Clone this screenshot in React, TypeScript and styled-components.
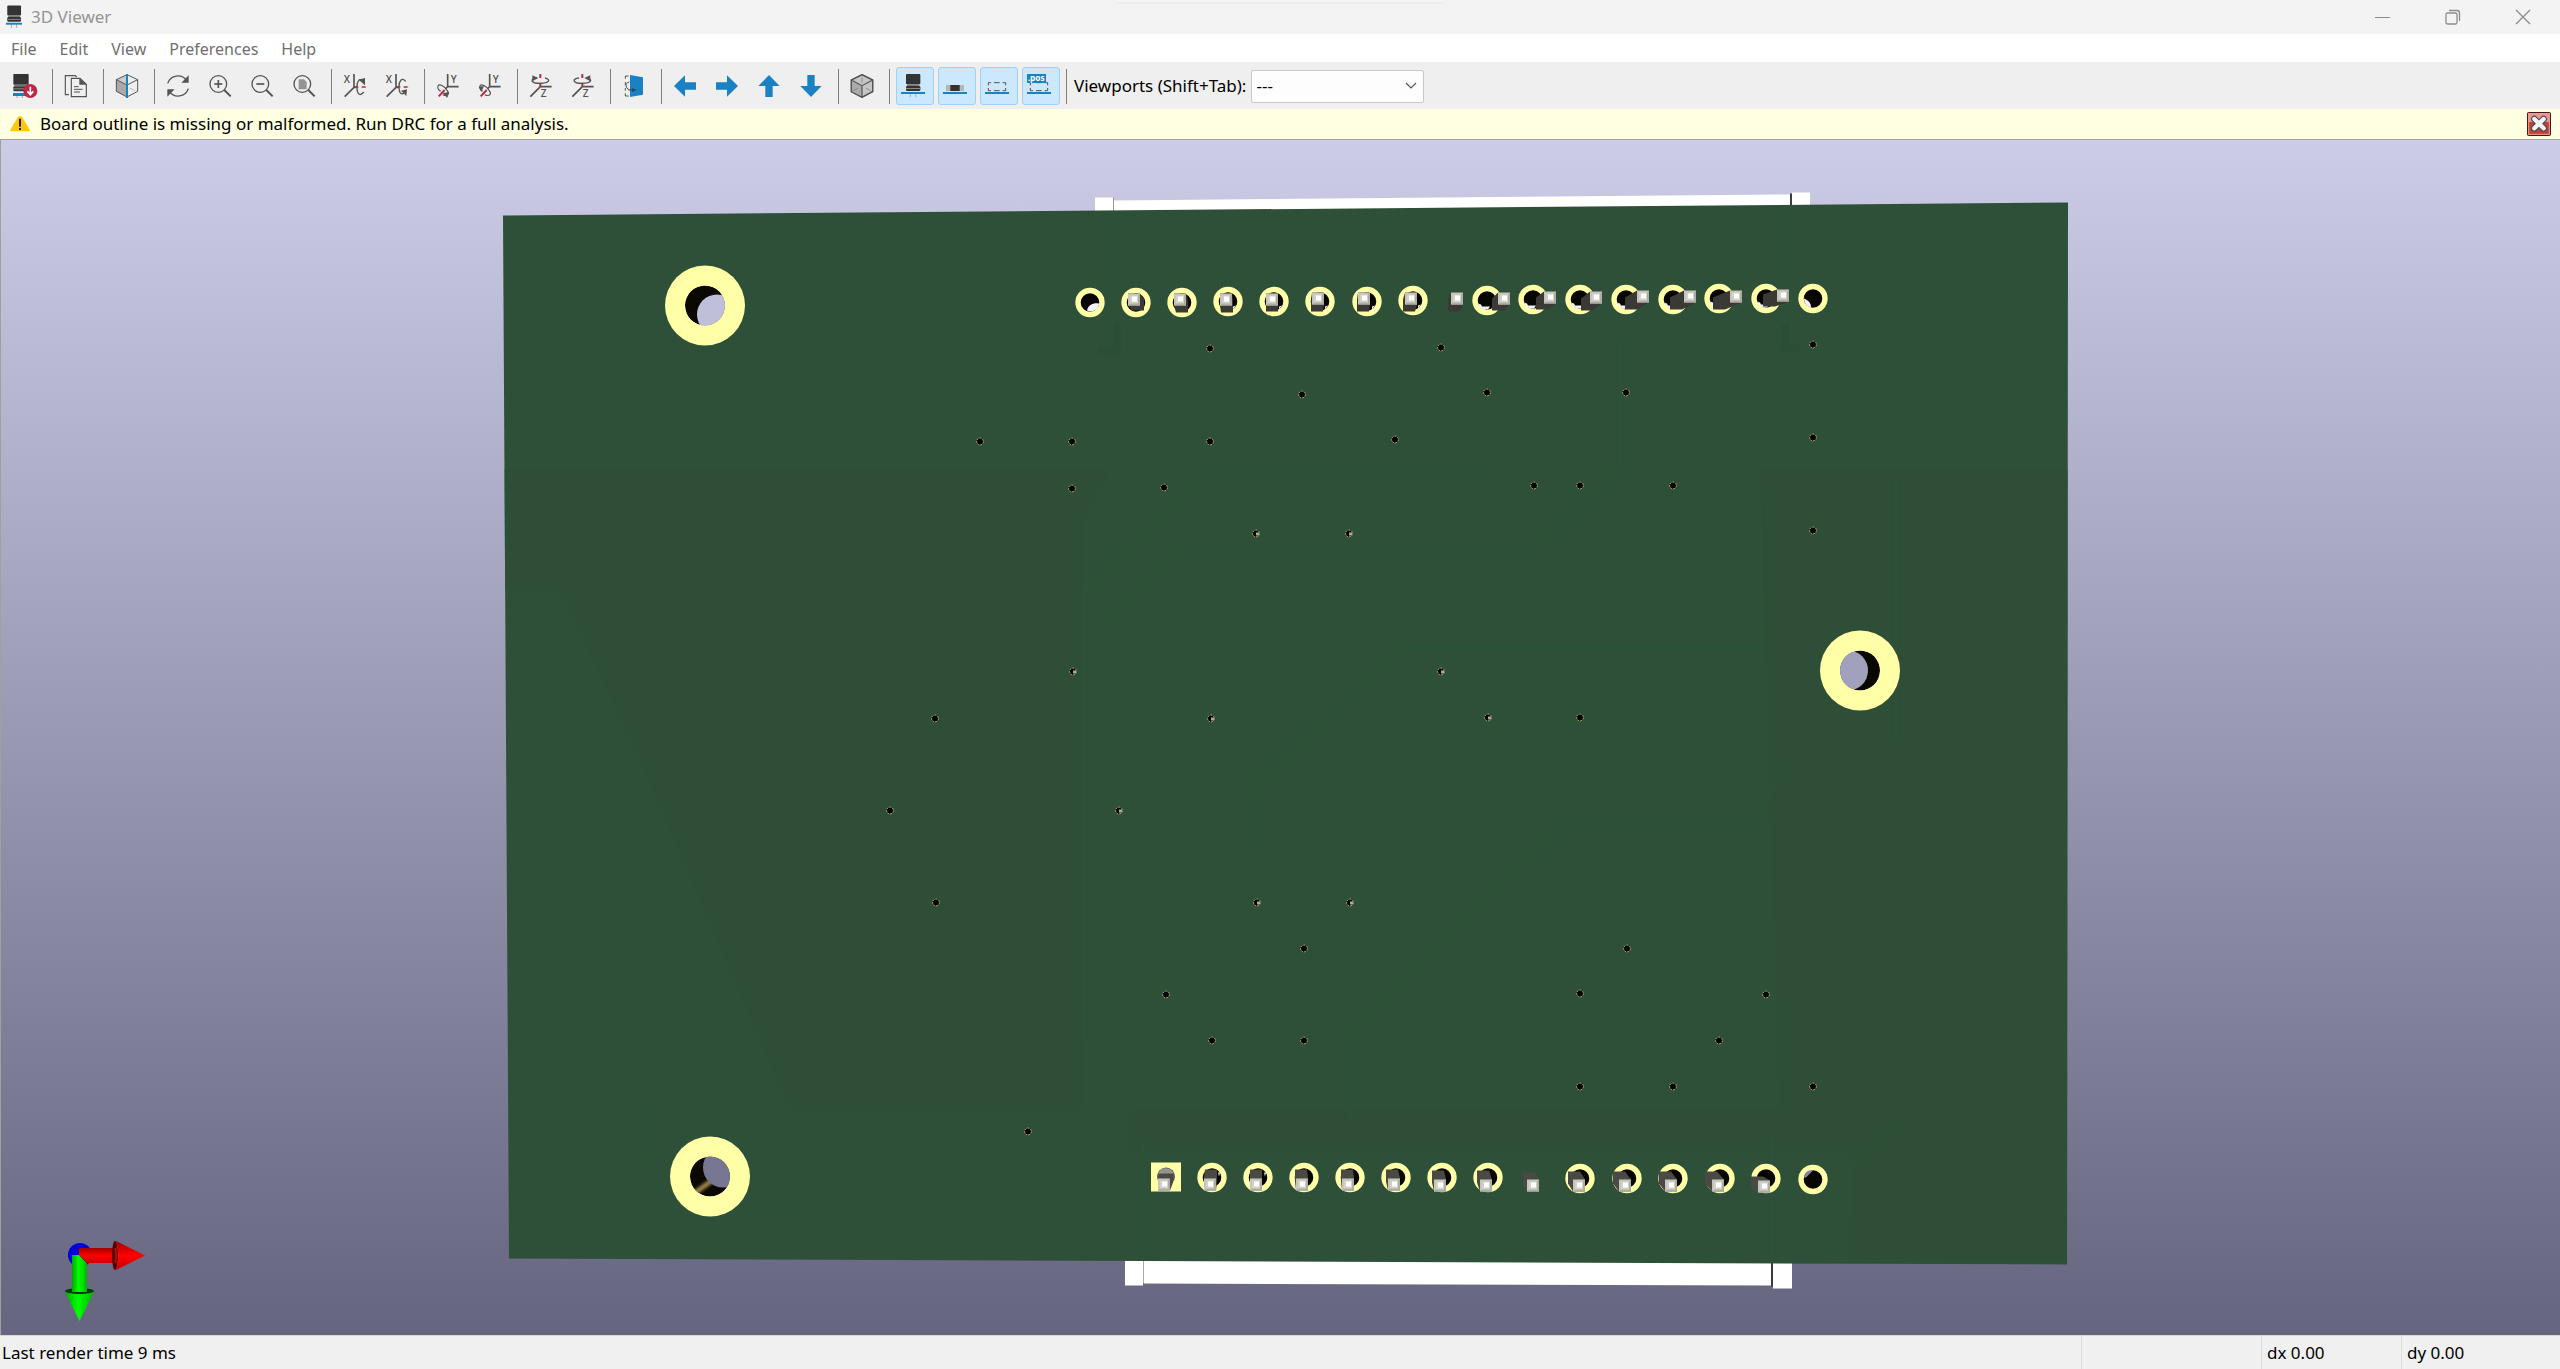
import React from "react";
import styled, { createGlobalStyle } from "styled-components";

const GlobalStyle = createGlobalStyle`
  *, *::before, *::after { box-sizing: border-box; }
  body { margin: 0; background: #efefef; }
  body, button, select {
    font-family: "Segoe UI", "Noto Sans", "Open Sans", sans-serif;
    font-size: 17px;
    line-height: 24px;
    color: #000;
  }
`;

const Window = styled.div`
  min-height: 100vh;
  display: flex;
  flex-direction: column;
`;

const TitleBar = styled.header`
  position: relative;
  height: 34px;
  flex: none;
  display: flex;
  align-items: center;
  justify-content: space-between;
  padding: 0 2px 0 6px;
  background: #f3f3f3;
`;

const SnapHandle = styled.div`
  position: absolute;
  top: 0;
  left: 50%;
  width: 328px;
  height: 2px;
  transform: translateX(-50%);
  border-radius: 0 0 8px 8px;
  background: #f6f6f6;
  box-shadow: 0 0 3px #dadada;
`;

const TitleText = styled.h1`
  display: flex;
  align-items: center;
  gap: 9px;
  margin: 0;
  font-size: 17px;
  font-weight: 400;
  color: #959595;
`;

const WindowControls = styled.div`
  display: flex;
`;

const WindowButton = styled.button`
  width: 70px;
  height: 34px;
  display: grid;
  place-items: center;
  padding: 0;
  border: 0;
  background: transparent;
  color: #8c8c8c;
`;

const MenuBar = styled.nav`
  height: 28px;
  flex: none;
  display: flex;
  align-items: center;
  gap: 23px;
  padding: 2px 0 0 11px;
  background: #fff;
`;

const MenuItem = styled.button`
  padding: 0;
  border: 0;
  background: transparent;
  font-size: 16px;
  color: #6f6f6f;
`;

const ToolBar = styled.div`
  height: 47px;
  flex: none;
  display: flex;
  align-items: center;
  padding: 1px 0 0 6px;
  background: #efefef;
`;

const ToolButton = styled.button<{ $active?: boolean }>`
  width: 38px;
  height: 38px;
  flex: none;
  display: grid;
  place-items: center;
  margin: 0 2px;
  padding: 0 4px 0 0;
  border: 1px solid ${(p) => (p.$active ? "#99d1ff" : "transparent")};
  border-radius: 3px;
  background: ${(p) => (p.$active ? "#cce8ff" : "transparent")};
`;

const GlyphSvg = styled.svg`
  display: block;
  width: 24px;
  height: 24px;
  overflow: visible;
`;

const Separator = styled.span`
  width: 1px;
  height: 35px;
  flex: none;
  margin: 0 4px;
  background: #7f7f7f;
`;

const ViewportLabel = styled.label`
  margin: 0 5px 0 3px;
  white-space: nowrap;
`;

const SelectWrap = styled.div`
  display: grid;
  align-items: center;
  width: 173px;

  & > * { grid-area: 1 / 1; }
  & > svg { justify-self: end; margin-right: 7px; pointer-events: none; }
`;

const ViewportSelect = styled.select`
  appearance: none;
  width: 100%;
  height: 33px;
  padding: 0 28px 0 4px;
  border: 1px solid #c8c8c8;
  border-radius: 2px;
  background: #fdfdfd;
`;

const InfoBar = styled.div`
  height: 30px;
  flex: none;
  display: flex;
  align-items: center;
  gap: 10px;
  padding: 0 9px 0 10px;
  background: #ffffe1;
`;

const InfoText = styled.p`
  flex: 1;
  margin: 0;
`;

const DismissButton = styled.button`
  width: 24px;
  height: 24px;
  display: grid;
  place-items: center;
  padding: 0;
  border: 0;
  background: transparent;
`;

const Viewport = styled.main`
  position: relative;
  flex: 1;
  min-height: 0;
  display: flex;
  border-top: 1px solid #a0a0a0;
  border-left: 1px solid #a0a0a0;
  background: linear-gradient(#cccce6, #65657f);
`;

const BoardDrawing = styled.svg`
  display: block;
  width: 100%;
  height: auto;
`;

const AxesGizmo = styled.svg`
  position: absolute;
  left: 59px;
  bottom: 9px;
`;

const StatusBar = styled.footer`
  height: 34px;
  flex: none;
  display: grid;
  grid-template-columns: 1fr 180px 140px 159px;
  align-items: stretch;
  border-top: 1px solid #d7d7d7;
  background: #f0f0f0;
`;

const StatusField = styled.span<{ $divided?: boolean }>`
  display: flex;
  align-items: center;
  padding-left: ${(p) => (p.$divided ? 5 : 2)}px;
  border-left: ${(p) => (p.$divided ? "1px solid #dcdcdc" : "0")};
`;

/* ---------- toolbar icons, drawn on a 72 unit grid ---------- */

const INK = "#545454";
const BLUE = "#1a81c4";
const RED = "#bf2641";

function Glyph({ children }: { children: React.ReactNode }) {
  return (
    <GlyphSvg viewBox="0 0 72 72" fill="none" stroke={INK} strokeWidth="4" aria-hidden="true">
      {children}
    </GlyphSvg>
  );
}

const Capacitor = () => (
  <g stroke="none">
    <path d="M28 58V70M44 58V70" stroke="#b9b9b9" strokeWidth="4" />
    <rect x="15" y="0" width="43" height="31" rx="3" fill="#333" />
    <rect x="18" y="31" width="37" height="5" fill="#777" />
    <rect x="15" y="36" width="43" height="15" rx="4" fill="#333" />
    <rect x="15" y="42" width="43" height="3" fill="#888" />
    <rect x="0" y="54" width="72" height="6" fill={BLUE} />
  </g>
);

const ReloadIcon = () => (
  <Glyph>
    <g stroke="none">
      <path d="M12 66V72M28 66V72" stroke="#b9b9b9" strokeWidth="4" />
      <rect x="1" y="0" width="46" height="32" rx="2" fill="#333" />
      <rect x="4" y="32" width="40" height="5" fill="#777" />
      <rect x="1" y="37" width="46" height="15" rx="3" fill="#3a3a3a" />
      <rect x="1" y="43" width="40" height="3" fill="#888" />
      <rect x="0" y="57" width="44" height="9" fill={BLUE} />
      <circle cx="52" cy="51" r="21" fill={RED} />
    </g>
    <path d="M52 38V61M43 52L52 62L61 52" stroke="#fff" strokeWidth="5" />
  </Glyph>
);

const CopyIcon = () => (
  <Glyph>
    <path d="M15 62H4V5H34L38 9" strokeWidth="3.5" />
    <path d="M22 13H48L67 31V68H22Z" strokeWidth="3.5" />
    <path d="M46 12V32H67Z" fill={INK} stroke="none" />
    <path d="M30 38H44M30 46H56M30 54H48" strokeWidth="3" />
  </Glyph>
);

const RaytraceIcon = () => (
  <Glyph>
    <path d="M4 17L36 33V69L4 52Z" fill="#a9a9a9" stroke="none" />
    <path d="M4 17L36 2L36 33Z" fill="#ccc" stroke="none" />
    <path d="M36 2L68 17V52L36 69L4 52V17ZM4 17L36 33L68 17" strokeWidth="3" />
    <path d="M44 42L60 50" strokeWidth="2" stroke="#999" />
    <path d="M36 0V72" stroke={BLUE} strokeWidth="6" />
  </Glyph>
);

const RefreshIcon = () => (
  <Glyph>
    <path d="M5 28A32 32 0 0 1 62 20M67 44A32 32 0 0 1 10 52" />
    <path d="M68 4V26H46ZM4 68V46H26Z" fill={INK} stroke="none" />
  </Glyph>
);

const ZoomIcon = ({ kind }: { kind: "in" | "out" | "fit" }) => (
  <Glyph>
    {kind === "fit" && <path d="M20 16H36L44 24V46H20Z" fill="#949494" stroke="none" />}
    <circle cx="31" cy="30" r="25" />
    <path d="M49 48L68 67" strokeWidth="6" />
    {kind !== "fit" && <path d="M19 30H43" strokeWidth="5" />}
    {kind === "in" && <path d="M31 18V42" strokeWidth="5" />}
  </Glyph>
);

const AxisText = ({ x, y, children }: { x: number; y: number; children: string }) => (
  <text x={x} y={y} fill={INK} stroke="none" fontSize="30" fontWeight="600" fontFamily="Open Sans, sans-serif">
    {children}
  </text>
);

const RotateXIcon = ({ back }: { back?: boolean }) => (
  <Glyph>
    <AxisText x={2} y={26}>X</AxisText>
    <path d="M33 0V40L5 68M33 40H40" strokeWidth="5" />
    <path d="M33 39H46M56 39H68" stroke={RED} strokeWidth="5" />
    {back ? (
      <g>
        <path d="M62 22C50 8 42 22 42 38C42 60 52 66 60 52" />
        <path d="M48 50L66 46L64 66Z" fill={INK} stroke="none" />
      </g>
    ) : (
      <g>
        <path d="M60 24C50 8 42 22 42 38C42 62 52 68 62 54" />
        <path d="M47 17L66 12L66 34Z" fill={INK} stroke="none" />
      </g>
    )}
  </Glyph>
);

const RotateYIcon = ({ back }: { back?: boolean }) => (
  <Glyph>
    <AxisText x={44} y={27}>Y</AxisText>
    <path d="M35 0V38H68M35 38L28 45" strokeWidth="5" />
    <path d="M26 48L8 67" stroke={RED} strokeWidth="6" />
    <path d="M20 62C34 68 42 62 34 50C26 36 8 28 6 36C4 42 8 48 14 52" strokeWidth="3.5" />
    {back ? (
      <path d="M2 38L18 36L10 54Z" fill={INK} stroke="none" />
    ) : (
      <path d="M20 58L38 54L34 72Z" fill={INK} stroke="none" />
    )}
  </Glyph>
);

const RotateZIcon = ({ back }: { back?: boolean }) => (
  <Glyph>
    <AxisText x={35} y={69}>Z</AxisText>
    <path d="M34 38L4 68M34 38H68" strokeWidth="5" />
    <path d="M34 0V12M34 26V38" stroke={RED} strokeWidth="6" />
    <path d="M24 12C2 14 4 28 34 28C62 28 66 16 48 12" />
    {back ? (
      <path d="M58 4V22L40 12Z" fill={INK} stroke="none" />
    ) : (
      <path d="M10 4V22L28 12Z" fill={INK} stroke="none" />
    )}
  </Glyph>
);

const FlipIcon = () => (
  <Glyph>
    <path d="M20 6H10V14M10 24V34M10 42V50M10 58V66H20" strokeWidth="3" />
    <path d="M22 24C8 26 10 44 22 47" strokeWidth="3" />
    <path d="M24 3L63 10V62L24 69Z" fill={BLUE} stroke="none" />
    <path d="M20 48H34" stroke="#2d4658" strokeWidth="3" />
    <path d="M30 42L44 48L30 54Z" fill="#2d4658" stroke="none" />
  </Glyph>
);

const ArrowIcon = ({ turn }: { turn: number }) => (
  <Glyph>
    <path
      d="M3 36L36 4V25H69V47H36V68Z"
      fill={BLUE}
      stroke="none"
      transform={`rotate(${turn} 36 36)`}
    />
  </Glyph>
);

const OrthoIcon = () => (
  <Glyph>
    <path d="M36 2L68 18V53L36 70L4 53V18Z" fill="#c5c5c5" />
    <path d="M4 18L36 35V70L4 53Z" fill="#aaa" stroke="none" />
    <path d="M36 2L68 18V53L36 70L4 53V18ZM4 18L36 35L68 18M36 35V70" strokeWidth="3.5" />
    <path d="M36 10V27M10 50L24 43M48 43L62 50" strokeWidth="2.5" stroke="#888" />
  </Glyph>
);

const SmdIcon = () => (
  <Glyph>
    <g stroke="none">
      <rect x="9" y="33" width="54" height="18" fill="#b9b5b2" />
      <rect x="22" y="33" width="28" height="18" fill="#333" />
      <rect x="0" y="54" width="72" height="6" fill={BLUE} />
    </g>
  </Glyph>
);

const VirtualIcon = ({ pos }: { pos?: boolean }) => (
  <Glyph>
    <path d="M10 34V26H18M27 26H44M53 26H62V34M62 42V50H53M44 50H27M18 50H10V42" strokeWidth="3" />
    <rect x="0" y="54" width="72" height="6" fill={BLUE} stroke="none" />
    {pos && (
      <g stroke="none">
        <rect x="0" y="0" width="57" height="27" fill={BLUE} />
        <text x="2" y="20" fill="#fff" fontSize="25" fontWeight="700" fontFamily="Open Sans, sans-serif">
          .pos
        </text>
      </g>
    )}
  </Glyph>
);

type Tool = { label: string; icon: React.ReactNode; active?: boolean };

const toolGroups: Tool[][] = [
  [{ label: "Reload board", icon: <ReloadIcon /> }],
  [{ label: "Copy 3D image", icon: <CopyIcon /> }],
  [{ label: "Raytracing", icon: <RaytraceIcon /> }],
  [
    { label: "Refresh", icon: <RefreshIcon /> },
    { label: "Zoom in", icon: <ZoomIcon kind="in" /> },
    { label: "Zoom out", icon: <ZoomIcon kind="out" /> },
    { label: "Zoom to fit", icon: <ZoomIcon kind="fit" /> },
  ],
  [
    { label: "Rotate X clockwise", icon: <RotateXIcon /> },
    { label: "Rotate X counterclockwise", icon: <RotateXIcon back /> },
  ],
  [
    { label: "Rotate Y clockwise", icon: <RotateYIcon /> },
    { label: "Rotate Y counterclockwise", icon: <RotateYIcon back /> },
  ],
  [
    { label: "Rotate Z clockwise", icon: <RotateZIcon /> },
    { label: "Rotate Z counterclockwise", icon: <RotateZIcon back /> },
  ],
  [{ label: "Flip board", icon: <FlipIcon /> }],
  [
    { label: "Move left", icon: <ArrowIcon turn={0} /> },
    { label: "Move right", icon: <ArrowIcon turn={180} /> },
    { label: "Move up", icon: <ArrowIcon turn={90} /> },
    { label: "Move down", icon: <ArrowIcon turn={270} /> },
  ],
  [{ label: "Orthographic projection", icon: <OrthoIcon /> }],
  [
    { label: "Through-hole models", icon: <Glyph><Capacitor /></Glyph>, active: true },
    { label: "SMD models", icon: <SmdIcon />, active: true },
    { label: "Virtual models", icon: <VirtualIcon />, active: true },
    { label: "Models not in position file", icon: <VirtualIcon pos />, active: true },
  ],
];

/* ---------- board scene ---------- */

type Point = [number, number];

const topPads: Point[] = [
  [1090, 303], [1136, 303], [1182, 303], [1228, 302], [1274, 302], [1320, 302], [1367, 302], [1413, 301],
  [1487, 301], [1533, 300], [1580, 300], [1626, 300], [1673, 300], [1719, 299], [1766, 299], [1813, 299],
];

const bottomPads: Point[] = [
  [1212, 1178], [1258, 1178], [1304, 1178], [1350, 1178], [1396, 1178], [1442, 1178], [1488, 1178],
  [1580, 1179], [1627, 1179], [1673, 1179], [1720, 1179], [1766, 1179], [1813, 1180],
];

/* tip x, tip y, and the offset from the tip to the pin's base */
const topPins: number[][] = [
  [1134, 300, 4, 5], [1180, 300, 2, 7], [1226, 300, 1, 7], [1272, 300, 0, 6], [1318, 299, -1, 7], [1364, 299, -1, 7],
  [1411, 299, -2, 7], [1457, 299, -3, 7], [1504, 299, -6, 6], [1550, 298, -8, 6], [1596, 298, -9, 7], [1643, 297, -12, 7],
  [1690, 297, -14, 7], [1736, 297, -17, 7], [1783, 296, -14, 5],
];

const bottomPins: number[][] = [
  [1164, 1185, 3, -8], [1210, 1185, 1, -9], [1256, 1185, 0, -9], [1302, 1185, -1, -9], [1348, 1185, -1, -9],
  [1394, 1185, -2, -9], [1440, 1186, -2, -9], [1486, 1186, -3, -9], [1533, 1186, -4, -7], [1579, 1186, -5, -8],
  [1625, 1186, -6, -8], [1671, 1186, -6, -8], [1718, 1186, -7, -8], [1764, 1187, -7, -4],
];

const vias: Point[] = [
  [1210, 349], [1441, 348], [1813, 345], [1302, 395], [1487, 393], [1626, 393], [980, 442], [1072, 442], [1210, 442],
  [1395, 440], [1813, 438], [1072, 489], [1164, 488], [1534, 486], [1580, 486], [1673, 486], [1256, 534], [1349, 534],
  [1813, 531], [1073, 672], [1441, 672], [935, 719], [1211, 719], [1488, 718], [1580, 718], [890, 811], [1119, 811],
  [936, 903], [1257, 903], [1350, 903], [1304, 949], [1627, 949], [1166, 995], [1580, 994], [1766, 995], [1212, 1041],
  [1304, 1041], [1719, 1041], [1580, 1087], [1673, 1087], [1813, 1087], [1028, 1132],
];

/* vias whose bore catches light from the far side */
const litVias = new Set(["1256-534", "1349-534", "1441-672", "1211-719", "1488-718", "1119-811", "1257-903", "1350-903", "1073-672"]);

/* outline of a square tip swept to a square base */
function sweep([x, y, dx, dy]: number[], half = 6) {
  const sx = dx < 0 ? -1 : 1;
  const sy = dy < 0 ? -1 : 1;
  const hx = half * sx;
  const hy = half * sy;
  return [
    [x - hx, y - hy], [x + hx, y - hy], [x + hx + dx, y - hy + dy],
    [x + hx + dx, y + hy + dy], [x - hx + dx, y + hy + dy], [x - hx, y + hy],
  ].map((p) => p.join(",")).join(" ");
}

const Pin = ({ pin }: { pin: number[] }) => {
  const [x, y] = pin;
  return (
    <g>
      <polygon points={sweep(pin)} fill={pin[3] < 0 ? "#4a4944" : "#3a3936"} />
      <rect x={x - 6} y={y - 6} width="12" height="12" fill="#c5c5bb" />
      <path d={`M${x + 6} ${y - 6}V${y + 6}H${x - 6}L${x} ${y}Z`} fill="#adada3" />
      <rect x={x - 4} y={y - 4} width="8" height="8" fill="#d2d2ca" />
      <rect x={x - 2} y={y - 3} width="5" height="5" fill="#fff" />
    </g>
  );
};

const Pad = ({ at: [x, y], glint }: { at: Point; glint?: string }) => (
  <g>
    <circle cx={x} cy={y} r="12" fill="#080600" stroke="#ffffa8" strokeWidth="5.4" />
    {glint && <path d={glint} transform={`translate(${x} ${y})`} fill="#f2f2fa" />}
  </g>
);

function topGlint(i: number) {
  if (i === 0) return "M-3 8C-2 2 4 0 9 1C9 5 6 9 0 9Z";
  if (i === 15) return "M-9 0C-4 2 -2 5 -2 9C-6 8 -9 5 -9 0Z";
  if (i > 7) return "M-9 3L-6 4L-5 6L3 6L1 9H-3L-7 7Z";
  if (i > 2) return "M5 5L8 4L5 8Z";
  return undefined;
}

function MountingHole({ id, cx, cy, dx, dy, sky }: { id: string; cx: number; cy: number; dx: number; dy: number; sky: string }) {
  return (
    <g>
      <clipPath id={id}><circle cx={cx} cy={cy} r="20" /></clipPath>
      <circle cx={cx} cy={cy} r="40" fill="#ffffa8" />
      <g clipPath={`url(#${id})`}>
        <circle cx={cx} cy={cy} r="20" fill="#0a0800" />
        {dy < 0 && (
          <path d={`M${cx + 2} ${cy + 4}L${cx - 16} ${cy + 17}`} stroke="#9a8449" strokeWidth="5" filter="url(#sheen)" />
        )}
        <circle cx={cx + dx} cy={cy + dy} r="20" fill={sky} />
      </g>
    </g>
  );
}

function Board() {
  return (
    <BoardDrawing viewBox="1 141 2559 1194" role="img" aria-label="Back of the circuit board">
      <defs>
        <filter id="sheen"><feGaussianBlur stdDeviation="1.5" /></filter>
        <clipPath id="outline"><path d="M503 216L2068 203L2067 1265L509 1259Z" /></clipPath>
      </defs>

      <path d="M1095 198H1113V220H1095ZM1114 201L1790 195V220H1114ZM1792 193H1810V220H1792Z" fill="#fff" />
      <path d="M1113.5 198V220" stroke="#999" />
      <path d="M1791 194V220" stroke="#3c3c38" strokeWidth="2" />
      <path d="M1125 1250H1143V1286H1125ZM1144 1250H1771V1286L1144 1284ZM1773 1250H1792V1289H1773Z" fill="#fff" />
      <path d="M1143.5 1250V1284" stroke="#aaa" />
      <path d="M1772 1250V1287" stroke="#3c3c38" strokeWidth="2" />

      <path d="M503 216L2068 203L2067 1265L509 1259Z" fill="#2e5038" />
      <g clipPath="url(#outline)">
        <path d="M503 470H1110L1083 520V1110H790L640 760L560 590L503 590Z" fill="#304d37" opacity=".6" />
        <path d="M1760 470H2068V1260H1850V1150H1130V1110H1780Z" fill="#304d37" opacity=".6" />
        <g fill="none" stroke="#2c5538" strokeWidth="2" opacity=".6">
          <path d="M1083 1040V590L1200 480H1480M1105 620L1180 545H1540L1620 465V340" />
          <path d="M1250 850V790L1400 650H1760V500M1350 1120V1030L1560 830H1750L1790 760" />
          <path d="M1113 216V345M1791 206V350M1143 1140V1260M1772 1140V1260M1851 1217V1168L1900 1120" />
          <path d="M1896 480V740M642 1110V1157H680M676 1200V1214H800" />
        </g>
        <path d="M1785 325V348H1800M1117 325V351H1098" stroke="#2b4c35" strokeWidth="8" fill="none" opacity=".6" />
      </g>

      <MountingHole id="hole-nw" cx={705} cy={306} dx={12} dy={9} sky="#bfbfd9" />
      <MountingHole id="hole-sw" cx={710} cy={1177} dx={13} dy={-9} sky="#777693" />
      <MountingHole id="hole-e" cx={1860} cy={671} dx={-12} dy={0} sky="#a2a1bd" />

      {vias.map(([x, y]) => (
        <g key={`${x}-${y}`}>
          <circle cx={x} cy={y} r="3.4" fill="#050500" stroke="#b9b57e" strokeWidth="1" strokeDasharray="2 1" />
          {litVias.has(`${x}-${y}`) && <rect x={x} y={y - 1} width="3" height="3" fill="#a9a9a9" />}
        </g>
      ))}

      {topPads.map((at, i) => <Pad key={at[0]} at={at} glint={topGlint(i)} />)}
      {topPins.map((pin) => <Pin key={pin[0]} pin={pin} />)}

      <rect x="1151" y="1163" width="30" height="29" fill="#ffffa8" />
      <circle cx="1166" cy="1177" r="9" fill="#55544e" />
      {bottomPads.map((at, i) => (
        <Pad key={at[0]} at={at} glint={i < 2 ? "M6 -5L8 -5L7 -1Z" : undefined} />
      ))}
      <path d="M1804 1178C1804 1173 1808 1170 1813 1171L1806 1178Z" fill="#8583a5" />
      {bottomPins.map((pin) => <Pin key={pin[0]} pin={pin} />)}
      <path d="M1158 1174C1160 1167 1171 1167 1174 1174Z" fill="#96958d" />
    </BoardDrawing>
  );
}

function Axes() {
  return (
    <AxesGizmo width="90" height="86" viewBox="60 1240 90 86" aria-label="Axis orientation">
      <defs>
        <linearGradient id="red" x1="0" y1="0" x2="0" y2="1">
          <stop offset="0" stopColor="#a00000" /><stop offset=".5" stopColor="#ff0000" /><stop offset="1" stopColor="#c80000" />
        </linearGradient>
        <linearGradient id="green">
          <stop offset="0" stopColor="#00a800" /><stop offset=".45" stopColor="#00ff00" /><stop offset="1" stopColor="#00b400" />
        </linearGradient>
      </defs>
      <circle cx="80" cy="1255" r="12" fill="#0000e0" />
      <path d="M72 1255H79L87 1263V1292H72Z" fill="url(#green)" />
      <path d="M79 1248H116V1263H87L79 1255Z" fill="url(#red)" />
      <ellipse cx="115" cy="1255.500" rx="3" ry="14.500" fill="#5a0000" />
      <path d="M115 1248H117V1263H115Z" fill="#c00000" />
      <path d="M116 1241L145 1255.500L116 1270C119 1262 119 1249 116 1241Z" fill="url(#red)" />
      <ellipse cx="79.500" cy="1291" rx="14.500" ry="3" fill="#003c00" />
      <path d="M65 1292C73 1295 86 1295 94 1292L79.500 1321Z" fill="url(#green)" />
      <path d="M72 1288H87V1292H72Z" fill="url(#green)" />
    </AxesGizmo>
  );
}

const menus = ["File", "Edit", "View", "Preferences", "Help"];

export default function App() {
  return (
    <Window>
      <GlobalStyle />
      <TitleBar>
        <SnapHandle />
        <TitleText>
          <svg width="16" height="24" viewBox="11 0 50 72" aria-hidden="true"><Capacitor /></svg>
          3D Viewer
        </TitleText>
        <WindowControls>
          <WindowButton aria-label="Minimize">
            <svg width="16" height="16"><path d="M0 8.500H15" stroke="currentColor" /></svg>
          </WindowButton>
          <WindowButton aria-label="Restore">
            <svg width="16" height="16" fill="none" stroke="currentColor" strokeWidth="1.300">
              <rect x="1" y="4" width="11" height="11" rx="1.500" />
              <path d="M4 1.500H12Q14.500 1.500 14.500 4V12" />
            </svg>
          </WindowButton>
          <WindowButton aria-label="Close">
            <svg width="16" height="16"><path d="M1 1L15 15M15 1L1 15" stroke="currentColor" strokeWidth="1.300" /></svg>
          </WindowButton>
        </WindowControls>
      </TitleBar>

      <MenuBar>
        {menus.map((name) => <MenuItem key={name}>{name}</MenuItem>)}
      </MenuBar>

      <ToolBar role="toolbar">
        {toolGroups.map((group) => (
          <React.Fragment key={group[0].label}>
            {group.map((tool) => (
              <ToolButton key={tool.label} $active={tool.active} aria-label={tool.label} aria-pressed={tool.active}>
                {tool.icon}
              </ToolButton>
            ))}
            <Separator />
          </React.Fragment>
        ))}
        <ViewportLabel htmlFor="viewports">Viewports (Shift+Tab):</ViewportLabel>
        <SelectWrap>
          <ViewportSelect id="viewports" defaultValue="---">
            <option>---</option>
          </ViewportSelect>
          <svg width="12" height="8" aria-hidden="true"><path d="M1 1L6 6L11 1" fill="none" stroke="#555" strokeWidth="1.200" /></svg>
        </SelectWrap>
      </ToolBar>

      <InfoBar role="alert">
        <svg width="20" height="16" viewBox="0 0 60 48" aria-hidden="true">
          <path d="M24 3Q30 -2 36 3L60 43Q60 46 56 46H4Q0 46 0 43Z" fill="#ffc60a" />
          <path d="M30 8V32" stroke="#222" strokeWidth="6" />
          <rect x="27" y="36" width="6" height="6" fill="#222" />
        </svg>
        <InfoText>Board outline is missing or malformed. Run DRC for a full analysis.</InfoText>
        <DismissButton aria-label="Dismiss">
          <svg width="24" height="24" viewBox="0 0 72 72">
            <rect x="1.500" y="1.500" width="69" height="69" rx="3" fill="#c14230" stroke="#4a1420" strokeWidth="3" />
            <rect x="3" y="3" width="66" height="27" fill="#e9968c" />
            <rect x="5" y="5" width="62" height="62" fill="none" stroke="#e6a198" strokeWidth="3" />
            <path d="M22 21L50 49M50 21L22 49" stroke="#454e5c" strokeWidth="20" strokeLinecap="round" />
            <path d="M22 21L50 49M50 21L22 49" stroke="#f4f4f4" strokeWidth="13" strokeLinecap="round" />
          </svg>
        </DismissButton>
      </InfoBar>

      <Viewport>
        <Board />
        <Axes />
      </Viewport>

      <StatusBar>
        <StatusField>Last render time 9 ms</StatusField>
        <StatusField $divided />
        <StatusField $divided>dx 0.00</StatusField>
        <StatusField $divided>dy 0.00</StatusField>
      </StatusBar>
    </Window>
  );
}
